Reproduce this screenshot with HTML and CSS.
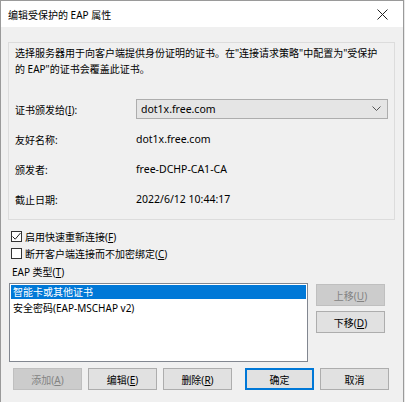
FILE: index.html
```html
<!DOCTYPE html>
<html lang="zh-CN">
<head>
    <meta charset="UTF-8">
    <title>编辑受保护的 EAP 属性</title>
    <link rel="stylesheet" href="styles.css">
</head>
<body>

<div class="window">
    <div class="titlebar">
        <span class="title">编辑受保护的 EAP 属性</span>
        <svg class="close" width="11" height="11" viewBox="0 0 11 11">
            <path d="M0.5 0.5 L10.5 10.5 M10.5 0.5 L0.5 10.5" stroke="#222" stroke-width="1" fill="none"/>
        </svg>
    </div>

    <div class="content">
        <div class="group">
            <p class="desc">选择服务器用于向客户端提供身份证明的证书。在"连接请求策略"中配置为"受保护<br>的 EAP"的证书会覆盖此证书。</p>

            <div class="row row-first">
                <span class="label">证书颁发给(<u>I</u>):</span>
                <div class="select">
                    <span class="latin">dot1x.free.com</span>
                    <svg width="9" height="6" viewBox="0 0 9 6">
                        <path d="M0.5 0.5 L4.5 4.5 L8.5 0.5" stroke="#555" stroke-width="1" fill="none"/>
                    </svg>
                </div>
            </div>
            <div class="row">
                <span class="label">友好名称:</span>
                <span class="value latin">dot1x.free.com</span>
            </div>
            <div class="row">
                <span class="label">颁发者:</span>
                <span class="value latin">free-DCHP-CA1-CA</span>
            </div>
            <div class="row">
                <span class="label">截止日期:</span>
                <span class="value latin">2022/6/12 10:44:17</span>
            </div>
        </div>

        <label class="check check-first">
            <span class="box">
                <svg width="9" height="9" viewBox="0 0 9 9">
                    <path d="M0.5 4.5 L3.2 7.2 L8.5 1" stroke="#222" stroke-width="1" fill="none"/>
                </svg>
            </span>
            <span>启用快速重新连接(<u>F</u>)</span>
        </label>
        <label class="check">
            <span class="box"></span>
            <span>断开客户端连接而不加密绑定(<u>C</u>)</span>
        </label>

        <div class="eap-label">EAP 类型(<u>T</u>)</div>

        <div class="eap-area">
            <ul class="listbox">
                <li class="selected">智能卡或其他证书</li>
                <li>安全密码(EAP-MSCHAP v2)</li>
            </ul>
            <div class="side-buttons">
                <button class="btn disabled">上移(<u>U</u>)</button>
                <button class="btn">下移(<u>D</u>)</button>
            </div>
        </div>

        <div class="bottom-buttons">
            <button class="btn disabled">添加(<u>A</u>)</button>
            <button class="btn">编辑(<u>E</u>)</button>
            <button class="btn">删除(<u>R</u>)</button>
            <button class="btn default">确定</button>
            <button class="btn">取消</button>
        </div>
    </div>
</div>

</body>
</html>
```

FILE: styles.css
```css
body {
    margin: 0;
    padding: 0;
    background: #e8e8e8;
    font-family: "Noto Sans", "Noto Sans CJK SC", sans-serif;
    font-size: 10px;
    color: #000;
}

.window {
    width: 402px;
    height: 401px;
    background: #f0f0f0;
    border-top: 1px solid #9a9a9a;
    border-left: 1px solid #9a9a9a;
    border-right: 1px solid #9a9a9a;
}

.titlebar {
    height: 26px;
    background: #fff;
    display: flex;
    align-items: center;
    justify-content: space-between;
    padding: 0 15px 0 7px;
}

.title {
    font-size: 10px;
}

.content {
    padding: 15px 0 0 7px;
}

.group {
    width: 387px;
    height: 178px;
    box-sizing: border-box;
    border: 1px solid #dcdcdc;
    padding: 0 0 0 6px;
}

.desc {
    margin: 2px 0 0 0;
    line-height: 16px;
}

.row {
    display: flex;
    align-items: center;
    height: 20px;
    margin-top: 10px;
}

.row-first {
    margin-top: 22px;
}

.label {
    width: 121px;
    flex-shrink: 0;
}

.latin {
    font-size: 10.5px;
}

.select {
    width: 252px;
    height: 20px;
    box-sizing: border-box;
    background: #e5e5e5;
    border: 1px solid #adadad;
    display: flex;
    align-items: center;
    justify-content: space-between;
    padding: 0 6px 0 4px;
}

.check {
    display: flex;
    align-items: center;
    gap: 3px;
    height: 14px;
    margin-left: 3px;
    margin-top: 3px;
}

.check-first {
    margin-top: 9px;
}

.box {
    width: 11px;
    height: 11px;
    box-sizing: border-box;
    border: 1px solid #333;
    background: #fff;
    display: flex;
    align-items: center;
    justify-content: center;
}

.eap-label {
    margin: 5px 0 0 4px;
    height: 14px;
    line-height: 14px;
}

.eap-area {
    display: flex;
    gap: 8px;
    margin-top: 4px;
}

.listbox {
    list-style: none;
    margin: 0 0 0 1px;
    padding: 1px;
    width: 299px;
    height: 79px;
    box-sizing: border-box;
    background: #fff;
    border: 1px solid #828790;
}

.listbox li {
    height: 14px;
    line-height: 14px;
    padding-left: 2px;
    margin-bottom: 2px;
}

.listbox li.selected {
    background: #0078d7;
    color: #fff;
}

.side-buttons {
    display: flex;
    flex-direction: column;
    gap: 5px;
    padding-top: 1px;
}

.btn {
    width: 69px;
    height: 22px;
    box-sizing: border-box;
    background: #e1e1e1;
    border: 1px solid #adadad;
    font-family: "Noto Sans", "Noto Sans CJK SC", sans-serif;
    font-size: 10px;
    color: #000;
    padding: 0;
}

.btn.disabled {
    background: #cccccc;
    border-color: #bfbfbf;
    color: #838383;
}

.btn.default {
    border: 2px solid #0078d7;
}

.bottom-buttons {
    display: flex;
    gap: 6px;
    margin: 6px 0 0 5px;
}

.bottom-buttons .default {
    margin-left: 7px;
}
```
